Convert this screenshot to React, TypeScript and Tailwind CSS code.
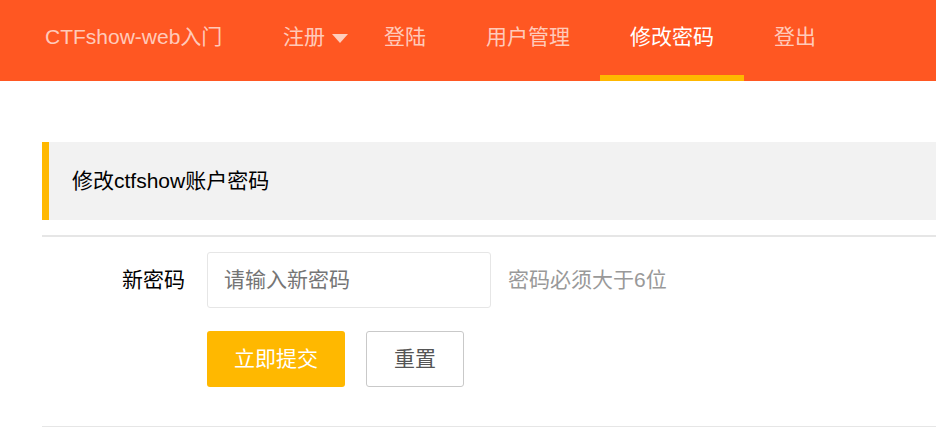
import React from 'react';

const font = { fontFamily: '"Liberation Sans", "Noto Sans CJK SC", sans-serif' };

const NavItem: React.FC<{ label: string; active?: boolean; dropdown?: boolean }> = ({ label, active, dropdown }) => (
  <li className="relative h-full">
    <a
      className={`flex h-full items-center pb-[7px] text-[21px] ${
        active ? 'text-white' : 'text-white/70'
      } ${dropdown ? 'pl-[31px] pr-[6px]' : 'px-[30px]'}`}
    >
      {label}
      {dropdown && (
        <span className="ml-[7px] mt-[2px] inline-block h-0 w-0 border-x-[8.5px] border-t-[9px] border-x-transparent border-t-white/70" />
      )}
    </a>
    {active && <span className="absolute bottom-0 left-0 h-[6px] w-full bg-[#FFB800]" />}
  </li>
);

export default function App() {
  return (
    <div className="min-h-screen bg-white" style={font}>
      {/* Header */}
      <div className="flex h-[81px] items-center bg-[#FF5722]">
        <div className="w-[252px] pb-[7px] pl-[45px] text-[21px] text-white/70">CTFshow-web入门</div>
        <ul className="flex h-full">
          <NavItem label="注册" dropdown />
          <NavItem label="登陆" />
          <NavItem label="用户管理" />
          <NavItem label="修改密码" active />
          <NavItem label="登出" />
        </ul>
      </div>

      <div className="pl-[42px]">
        {/* Title block */}
        <div className="mt-[61px] flex h-[78px] items-center border-l-[7px] border-[#FFB800] bg-[#f2f2f2] pl-[23px] text-[21px] text-black">
          修改ctfshow账户密码
        </div>
        <div className="mt-[15px] h-[2px] bg-[#e6e6e6]" />

        {/* Form */}
        <div className="mt-[15px] flex items-center">
          <label className="w-[165px] pr-[22px] text-right text-[21px] text-black">新密码</label>
          <input
            type="password"
            placeholder="请输入新密码"
            className="h-[56px] w-[284px] rounded-[3px] border border-[#e6e6e6] bg-white pl-[16px] text-[21px] outline-none placeholder:text-[#757575]"
            style={font}
          />
          <span className="ml-[17px] text-[21px] text-[#999]">密码必须大于6位</span>
        </div>
        <div className="ml-[165px] mt-[23px] flex gap-[21px]">
          <button className="h-[56px] w-[138px] rounded-[3px] bg-[#FFB800] text-[21px] text-white" style={font}>
            立即提交
          </button>
          <button
            className="h-[56px] w-[98px] rounded-[3px] border border-[#c9c9c9] bg-white text-[21px] text-[#555]"
            style={font}
          >
            重置
          </button>
        </div>
        <div className="mt-[39px] h-[1px] bg-[#e6e6e6]" />
      </div>
    </div>
  );
}
